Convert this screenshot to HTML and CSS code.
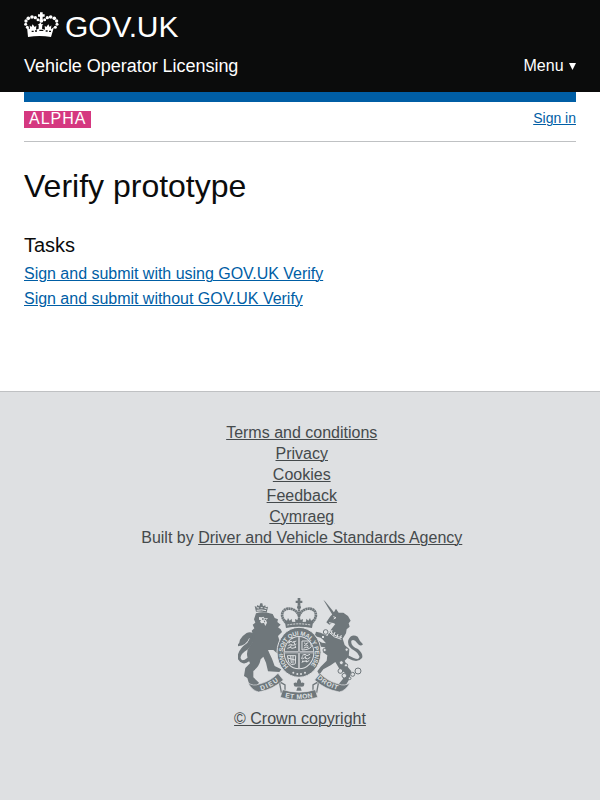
FILE: index.html
```html
<!DOCTYPE html>
<html lang="en">
<head>
<meta charset="utf-8">
<title>Verify prototype</title>
<link rel="stylesheet" href="styles.css">
</head>
<body>
<header class="header">
  <a class="brand" href="#">
    <svg class="crown" viewBox="12 11 105 81" fill="#fff" aria-hidden="true">
      <path d="M60 12h8v6h6v7h-6v7h-8v-7h-6v-7h6z"/>
      <circle cx="64" cy="37" r="6"/>
      <circle cx="54" cy="34" r="4.5"/><circle cx="74" cy="34" r="4.5"/>
      <circle cx="46" cy="28" r="5"/><circle cx="36" cy="26" r="5.5"/><circle cx="25" cy="30" r="5.5"/><circle cx="18" cy="38" r="5"/><circle cx="17" cy="48" r="4.5"/><circle cx="22" cy="57" r="4.5"/>
      <circle cx="82" cy="28" r="5"/><circle cx="92" cy="26" r="5.5"/><circle cx="103" cy="30" r="5.5"/><circle cx="110" cy="38" r="5"/><circle cx="111" cy="48" r="4.5"/><circle cx="106" cy="57" r="4.5"/>
      <path d="M21 56l9 7-1-12 5 5 4-8 6 8 5-4-1 12 8-3V51l-3-4 4 1 4-6 4 6 5-1-3 4-1 10 9 3-1-12 5 4 6-8 4 8 5-5-1 12 9-7-9 30q-34-6-69 0z"/>
      <path d="M35 69h6m4-1h6m7-2h12m7 2h6m4 1h6" stroke="#0b0c0c" stroke-width="4"/>
    </svg>
    <span class="brand-name">GOV.UK</span>
  </a>
  <div class="header-row">
    <span class="service">Vehicle Operator Licensing</span>
    <a class="menu" href="#">Menu <svg class="arrow" viewBox="0 0 7 7" aria-hidden="true"><path d="M0 0h7L3.5 7z" fill="#fff"/></svg></a>
  </div>
</header>
<div class="bar"></div>
<div class="phase"><span class="tag">ALPHA</span><a class="signin" href="#">Sign in</a></div>
<main>
  <h1>Verify prototype</h1>
  <h2>Tasks</h2>
  <ul class="tasks">
    <li><a href="#">Sign and submit with using GOV.UK Verify</a></li>
    <li><a href="#">Sign and submit without GOV.UK Verify</a></li>
  </ul>
</main>
<footer>
  <ul class="links">
    <li><a href="#">Terms and conditions</a></li>
    <li><a href="#">Privacy</a></li>
    <li><a href="#">Cookies</a></li>
    <li><a href="#">Feedback</a></li>
    <li><a href="#">Cymraeg</a></li>
    <li>Built by <a href="#">Driver and Vehicle Standards Agency</a></li>
  </ul>
  <svg class="crest" viewBox="54 24 375 306" fill="#6f777b" aria-hidden="true">
    <defs>
      <path id="garter" d="M206 230A48 53 0 1 1 268 230"/>
      <path id="left" d="M123 301Q154 293 182 268"/>
      <path id="mid" d="M195 322Q237 332 281 321"/>
      <path id="right" d="M291 265Q318 291 360 302"/>
    </defs>
    <!-- lion -->
    <path d="M108 65l-4-17 6 3 2-6 6 4 3-9h6l2 9 7-3 1 6 7-2-4 18q-17-5-32-3z"/>
    <path d="M110 53l7 1m5-1h6m5 1l7 2M110 61q16-3 28 1" stroke="#dee0e2" stroke-width="3" fill="none"/>
    <path d="M108 70L102 88L106 98L98 104L103 115L95 122L99 134L94 142L98 155L90 168Q78 182 82 200L90 220L76 234L72 258L82 264L88 284L112 286L117 278L100 262L100 243Q118 230 122 208L130 200L138 218L144 244L178 246L184 238L164 228L156 206Q148 190 144 180L160 180L178 196L190 190L180 174L190 162L178 150L174 138L186 126L182 118L174 112L182 104L172 96L174 88L164 84L158 72Q130 63 108 70z"/>
    <path d="M117 81l9 1 4-2 4 5 10-1-6 7 3 7-5 10-4-9-8 1-4-5 3-4-6-2z" fill="#dee0e2"/>
    <path d="M126 85h5v4h-5zM134 86h5v4h-5zM131 92h5l-2 6z"/>
    <path d="M84 205Q64 222 59 204Q60 188 82 176Q109 146 98 132Q82 121 62 151Q61 162 54 166Q77 166 88 138Q96 144 84 160Q52 182 56 206Q68 226 86 212z" stroke="#6f777b" stroke-width="5"/>
    <path d="M78 186Q63 195 69 207L78 202z" fill="#dee0e2"/>
    <!-- unicorn -->
    <path d="M310 29l7 7 29 36-8 4z"/>
    <path d="M340 70L348 56L356 68L370 68L384 78L392 92L386 100L389 110L380 118L378 130L368 146L374 165L388 178L386 200L374 212L384 232L394 244L388 268L378 284L354 285L368 268L376 250L358 236L346 216L332 226L310 238L298 254L292 244L302 230L320 212L322 196L308 186L316 172L302 170L286 160L292 150L306 158L318 160L304 144L284 138L288 125L302 128L322 138L332 120L346 102L338 98L328 104L319 97L330 80z"/>
    <path d="M327 117q16 25 39 25m-42-18q18 21 40 24M336 120l-3 12m12-6l-4 12m13-6l-4 12m14-9l-4 10" fill="none" stroke="#dee0e2" stroke-width="3"/>
    <path d="M340 80l8 3-7 4m-14 11l9 2" fill="none" stroke="#dee0e2" stroke-width="3"/>
    <path d="M384 196Q421 216 418 199Q416 190 405 183Q380 170 385 150Q394 130 413 140Q419 154 429 163Q421 172 412 160Q402 145 394 152Q391 169 414 177Q431 192 426 204Q413 221 384 205z"/>
    <g fill="#dee0e2" stroke="#6f777b" stroke-width="3"><circle cx="317" cy="126" r="7"/><circle cx="309" cy="141" r="5"/><circle cx="314" cy="180" r="5"/><circle cx="380" cy="179" r="5"/><circle cx="364" cy="218" r="6"/><circle cx="378" cy="226" r="5"/><circle cx="361" cy="243" r="7"/><circle cx="373" cy="257" r="7"/><circle cx="398" cy="253" r="6"/><circle cx="389" cy="265" r="4"/><circle cx="414" cy="243" r="9"/></g>
    <!-- crown -->
    <path d="M233 24h8v8h6v7h-6v8h-8v-8h-6v-7h6z"/>
    <circle cx="237" cy="52" r="6"/>
    <path d="M198 98C174 75 190 48 218 58Q232 63 237 78Q242 63 256 58C284 48 300 75 276 98" fill="none" stroke="#6f777b" stroke-width="8" stroke-dasharray="6 1"/>
    <path d="M237 58v32" stroke="#6f777b" stroke-width="7" stroke-dasharray="5 1.5"/>
    <path d="M198 114l-5-27 8 5 3-8 5 8 6-6 1 9 10 1-1-9 7 3 5-10 5 10 7-3-1 9 10-1 1-9 6 6 5-8 3 8 8-5-5 27q-40-8-78 0z"/>
    <path d="M202 105q35-7 70 0" fill="none" stroke="#dee0e2" stroke-width="3" stroke-dasharray="6 3"/>
    <!-- garter and shield -->
    <ellipse cx="237" cy="187" rx="66" ry="75" stroke="#dee0e2" stroke-width="3"/>
    <ellipse cx="237" cy="188" rx="46" ry="50" fill="#dee0e2"/>
    <ellipse cx="237" cy="188" rx="43" ry="47"/>
    <text class="motto"><textPath href="#garter" textLength="243">HONI·SOIT QUI MAL Y PENSE</textPath></text>
    <path d="M237 142v92M194 187h86" stroke="#dee0e2" stroke-width="6"/>
    <path d="M237 142v92M194 187h86" stroke="#6f777b" stroke-width="2"/>
    <g fill="none" stroke="#dee0e2" stroke-width="3">
      <path d="M205 158l8-4 5 3 11-4m-24 14l7-4 7 3 10-4m-27 13l9-3 5 3 12-3M210 153l-3 7m14-6l3 8m-10 3l-3 8m14-7l2 7"/>
      <path d="M246 153h22q6 8 6 17-8 10-28 10zM252 158l5 4 8-4m-13 10l6-4 7 5m-14 6l7-4 7 2"/>
      <path d="M202 197l4 19q9 13 20 5l1-24zM212 197l2 22m5-22v24m-16-17l22 6"/>
      <path d="M247 196l8-3 6 4 9-4m-23 14l7-4 8 4 9-5m-23 14l7-3 6 3 7-5m-21-12l-2 8m10-10l3 9m-9 5l-3 7m12-8l2 6"/>
    </g>
    <g fill="#dee0e2"><circle cx="220" cy="248" r="3"/><circle cx="232" cy="252" r="3"/><circle cx="243" cy="252" r="3"/><circle cx="255" cy="248" r="3"/></g>
    <!-- scroll -->
    <path d="M178 275l17 10v16l-11 6zm118 0l-17 10v16l11 6z" fill="#dee0e2" stroke="#6f777b" stroke-width="4"/>
    <path d="M84 278Q100 290 118 282Q150 275 174 250L190 270Q160 298 116 306Q96 302 84 278zM390 278Q374 290 356 282Q324 275 300 250L284 270Q314 298 358 306Q378 302 390 278z" stroke="#dee0e2" stroke-width="2"/>
    <path d="M188 299q49 15 98 0l7 23q-56 17-112 0z" stroke="#dee0e2" stroke-width="2"/>
    <text class="scroll"><textPath href="#left" textLength="60">DIEU</textPath></text>
    <text class="scroll"><textPath href="#mid" textLength="84">ET MON</textPath></text>
    <text class="scroll"><textPath href="#right" textLength="70">DROIT</textPath></text>
    <path d="M237 265q12 12 2 23 4-15 14-8 0 14-12 10l4 12h-16l4-12q-12 4-12-10 10-7 14 8-10-11 2-23z"/>
    <path d="M224 291h26" stroke="#dee0e2" stroke-width="2"/>
  </svg>
  <a class="copyright" href="#">© Crown copyright</a>
</footer>
</body>
</html>
```
FILE: styles.css
```css
* { box-sizing: border-box; }
body { margin: 0; background: #fff; color: #0b0c0c; font: 16px/20px "Liberation Sans", Arial, sans-serif; }
a { color: #005ea5; text-decoration: underline; text-underline-offset: 1px; text-decoration-thickness: 1px; }
ul { margin: 0; padding: 0; list-style: none; }
.header { height: 92px; padding: 11px 24px 0; background: #0b0c0c; color: #fff; }
.header a { color: #fff; text-decoration: none; }
.brand { display: flex; height: 32px; }
.crown { width: 35px; height: 27px; margin-top: 1px; }
.brand-name { margin-left: 6px; font-size: 30px; line-height: 31px; letter-spacing: -.1px; }
.header-row { display: flex; justify-content: space-between; margin-top: 13px; }
.service { font-size: 18px; letter-spacing: -.03px; }
.arrow { width: 7px; height: 7px; margin: 0 0 1px 1px; }
.bar { height: 10px; margin: 0 24px; background: #005ea5; }
.phase { display: flex; justify-content: space-between; align-items: flex-start; height: 40px; margin: 0 24px; padding-top: 9px; border-bottom: 1px solid #bfc1c3; }
.tag { width: 67px; height: 17px; padding-left: 5px; background: #d53880; color: #fff; line-height: 16px; letter-spacing: 1px; }
.signin { font-size: 14px; line-height: 15px; }
main { height: 249px; padding: 27px 24px 0; }
h1 { margin: 0; font-size: 32px; line-height: 35px; font-weight: 400; }
h2 { margin: 29px 0 6px; font-size: 20px; line-height: 25px; font-weight: 400; }
.tasks li { height: 25px; letter-spacing: -.02px; }
footer { display: flex; flex-direction: column; align-items: center; height: 409px; padding-top: 30px; background: #dee0e2; border-top: 1px solid #bfc1c3; color: #454a4c; }
footer a { color: #454a4c; }
.links { padding-left: 3.5px; text-align: center; line-height: 21px; }
.crest { width: 125px; height: 102px; margin-top: 50px; }
.motto { font-size: 18px; font-weight: 700; fill: #dee0e2; }
.scroll { font-size: 20px; font-weight: 700; fill: #dee0e2; }
.copyright { margin-top: 9px; }
```
